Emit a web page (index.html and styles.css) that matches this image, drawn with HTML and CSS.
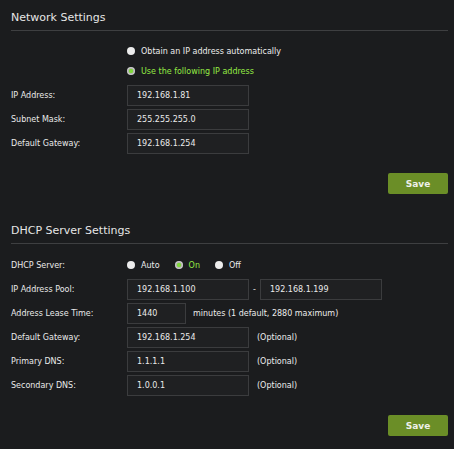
FILE: index.html
```html
<!DOCTYPE html>
<html>
<head>
<meta charset="utf-8">
<link rel="stylesheet" href="styles.css">
</head>
<body>
<div class="page">
  <section class="section">
    <h2 class="title">Network Settings</h2>
    <div class="radio-row first">
      <span class="radio"></span><span class="radio-text">Obtain an IP address automatically</span>
    </div>
    <div class="radio-row">
      <span class="radio checked"></span><span class="radio-text on">Use the following IP address</span>
    </div>
    <div class="rows">
      <div class="row"><span class="label">IP Address:</span><div class="field">192.168.1.81</div></div>
      <div class="row"><span class="label">Subnet Mask:</span><div class="field">255.255.255.0</div></div>
      <div class="row"><span class="label">Default Gateway:</span><div class="field">192.168.1.254</div></div>
    </div>
    <div class="actions"><button class="save">Save</button></div>
  </section>

  <section class="section second">
    <h2 class="title">DHCP Server Settings</h2>
    <div class="server-row">
      <span class="label">DHCP Server:</span>
      <div class="choices">
        <span class="choice"><span class="radio"></span><span class="radio-text">Auto</span></span>
        <span class="choice"><span class="radio checked"></span><span class="radio-text on">On</span></span>
        <span class="choice"><span class="radio"></span><span class="radio-text">Off</span></span>
      </div>
    </div>
    <div class="rows">
      <div class="row"><span class="label">IP Address Pool:</span><div class="field">192.168.1.100</div><span class="dash">-</span><div class="field">192.168.1.199</div></div>
      <div class="row"><span class="label">Address Lease Time:</span><div class="field small">1440</div><span class="note">minutes (1 default, 2880 maximum)</span></div>
      <div class="row"><span class="label">Default Gateway:</span><div class="field">192.168.1.254</div><span class="note opt">(Optional)</span></div>
      <div class="row"><span class="label">Primary DNS:</span><div class="field">1.1.1.1</div><span class="note opt">(Optional)</span></div>
      <div class="row"><span class="label">Secondary DNS:</span><div class="field">1.0.0.1</div><span class="note opt">(Optional)</span></div>
    </div>
    <div class="actions"><button class="save">Save</button></div>
  </section>
</div>
</body>
</html>
```
FILE: styles.css
```css
html, body {
  margin: 0;
  padding: 0;
  background: #1b1c1e;
}
body {
  font-family: "DejaVu Sans", Verdana, sans-serif;
  font-size: 8px;
  color: #e6e6e6;
  width: 454px;
  height: 449px;
  overflow: hidden;
}
.page {
  padding: 0 6px 0 11px;
}
.section.second {
  margin-top: 19px;
}
.title {
  margin: 0;
  padding: 11px 0 5px 0;
  font-size: 11px;
  line-height: 14px;
  font-weight: normal;
  color: #e6e6e6;
  border-bottom: 1px solid #3e3f41;
}
.radio-row {
  display: flex;
  align-items: center;
  height: 20px;
  padding-left: 116px;
}
.radio-row.first {
  margin-top: 10px;
}
.radio {
  display: inline-block;
  width: 8px;
  height: 8px;
  border-radius: 50%;
  background: #ececec;
  flex: none;
}
.radio.checked {
  background: radial-gradient(circle, #7fd83a 0 1.8px, #b0b4ac 2.5px, #d8d8d8 4px);
}
.radio-text {
  margin-left: 6px;
  color: #ececec;
}
.radio-text.on {
  color: #94ea44;
}
.rows {
  margin-top: 4px;
  display: flex;
  flex-direction: column;
  gap: 3px;
}
.row {
  display: flex;
  align-items: center;
  height: 21px;
}
.label {
  width: 116px;
  flex: none;
  color: #eaeaea;
}
.field {
  box-sizing: border-box;
  width: 122px;
  height: 21px;
  border: 1px solid #3b3c3e;
  background: #1f2022;
  padding-left: 9px;
  line-height: 19px;
  color: #ebebeb;
  flex: none;
}
.field.small {
  width: 59px;
}
.dash {
  width: 11px;
  text-align: center;
  color: #e6e6e6;
}
.note {
  margin-left: 7px;
  color: #ececec;
}
.note.opt {
  margin-left: 8px;
}
.actions {
  display: flex;
  justify-content: flex-end;
  margin-top: 19px;
}
.save {
  width: 60px;
  height: 21px;
  border: none;
  border-radius: 2px;
  background: #6b8e27;
  color: #eef0ea;
  font-family: "DejaVu Sans", Verdana, sans-serif;
  font-size: 9px;
  font-weight: bold;
  padding: 0;
}
.server-row {
  display: flex;
  align-items: center;
  height: 20px;
  margin-top: 11px;
}
.choices {
  display: flex;
  align-items: center;
  gap: 15px;
}
.choice {
  display: flex;
  align-items: center;
}
```
